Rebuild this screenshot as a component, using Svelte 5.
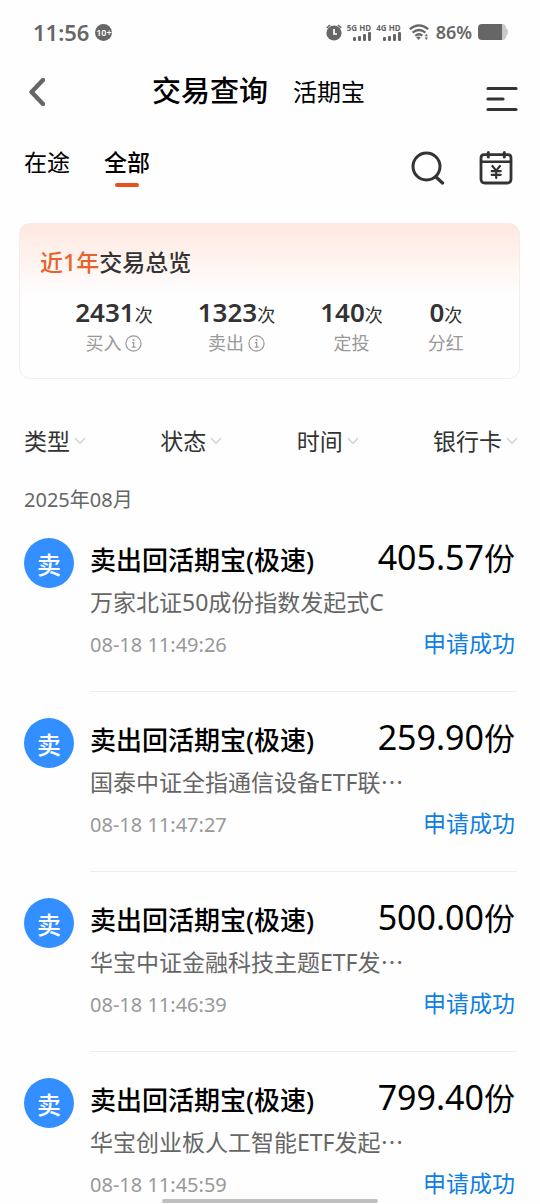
<script>
	let tabs = ['在途', '全部'];
	let activeTab = '全部';

	let stats = [
		{ count: 2431, label: '买入', info: true },
		{ count: 1323, label: '卖出', info: true },
		{ count: 140, label: '定投', info: false },
		{ count: 0, label: '分红', info: false }
	];

	let filters = ['类型', '状态', '时间', '银行卡'];

	let records = [
		{ fund: '万家北证50成份指数发起式C', time: '08-18 11:49:26', amount: '405.57' },
		{ fund: '国泰中证全指通信设备ETF联⋯', time: '08-18 11:47:27', amount: '259.90' },
		{ fund: '华宝中证金融科技主题ETF发⋯', time: '08-18 11:46:39', amount: '500.00' },
		{ fund: '华宝创业板人工智能ETF发起⋯', time: '08-18 11:45:59', amount: '799.40' }
	];
</script>

<div class="page" lang="zh-CN">
	<div class="statusbar">
		<span class="clock">11:56</span>
		<span class="badge">10+</span>
		<div class="system">
			<svg width="16" height="17" viewBox="0 0 16 17">
				<circle cx="8" cy="9" r="7.6" fill="#666" />
				<path d="M0.8 4 L4 1 M15.2 4 L12 1" stroke="#666" stroke-width="1.6" />
				<path d="M8 5 V10 H11" fill="none" stroke="#fff" stroke-width="1.7" />
			</svg>
			{#each ['5G HD', '4G HD'] as net}
				<div class="net">
					<span>{net}</span>
					<svg width="18" height="9" viewBox="0 0 18 9" fill="#666">
						<rect x="0" y="5" width="3" height="4" rx="1" />
						<rect x="5" y="4" width="3" height="5" rx="1" />
						<rect x="10" y="2" width="3" height="7" rx="1" />
						<rect x="15" y="0" width="3" height="9" rx="1" />
					</svg>
				</div>
			{/each}
			<svg class="wifi" width="20" height="17" viewBox="0 0 20 17">
				<g fill="none" stroke="#666" stroke-width="2.2">
					<path d="M0.8 5.2 Q10 -2.6 19.2 5.2" />
					<path d="M3.6 8.6 Q10 3.4 16.4 8.6" />
					<path d="M6.3 11.8 Q10 8.8 13.4 11.6" />
				</g>
				<path d="M7.2 13.2 Q9.5 11.8 11.8 13.2 L9.5 16 Z M15.6 12.2 L17.3 9.8 L19 12.2 Z M15.6 13.6 H19 L17.3 16 Z" fill="#666" />
			</svg>
			<span class="percent">86%</span>
			<svg class="battery" width="30" height="16" viewBox="0 0 30 16">
				<path d="M20 0 H24 Q28 0 28 4 Q30 5 30 8 Q30 11 28 12 Q28 16 24 16 H20 Z" fill="#c9c9c9" />
				<path d="M4 0 H24 V16 H4 Q0 16 0 12 V4 Q0 0 4 0 Z" fill="#666" />
			</svg>
		</div>
	</div>

	<header>
		<button class="back" aria-label="返回">
			<svg width="17" height="28" viewBox="0 0 17 28">
				<path d="M15 2 L3.5 14 L15 26" fill="none" stroke="#666" stroke-width="4.4" stroke-linecap="round" stroke-linejoin="round" />
			</svg>
		</button>
		<div class="titles">
			<h1>交易查询</h1>
			<button>活期宝</button>
		</div>
		<button class="menu" aria-label="菜单">
			<svg width="32" height="26" viewBox="0 0 32 26">
				<path d="M2 2.5 H30 M2 13 H17 M2 23.5 H30" stroke="#333" stroke-width="3.2" stroke-linecap="round" />
			</svg>
		</button>
	</header>

	<nav>
		{#each tabs as tab}
			<button class="tab" class:active={tab === activeTab} on:click={() => (activeTab = tab)}>{tab}</button>
		{/each}
		<div class="tools">
			<button aria-label="搜索">
				<svg width="34" height="34" viewBox="0 0 34 34">
					<circle cx="15.5" cy="15.5" r="13.5" fill="none" stroke="#333" stroke-width="3" />
					<path d="M25 26 L31.5 32" stroke="#333" stroke-width="3.2" stroke-linecap="round" />
				</svg>
			</button>
			<button aria-label="日历">
				<svg width="34" height="34" viewBox="0 0 34 34">
					<g fill="none" stroke="#333" stroke-linecap="round" stroke-linejoin="round">
						<path d="M5 3.6 H29 Q32 3.6 32 7 V28 Q32 32 28 32 H6 Q2 32 2 28 V7 Q2 3.6 5 3.6 Z" stroke-width="2.8" />
						<path d="M2 10.8 H32" stroke-width="2.4" />
						<path d="M9.3 1.6 V6 M25.3 1.6 V6" stroke-width="3" />
						<path d="M13.4 15 L17.2 19.6 L21 15 M17.2 19.6 V27 M12.7 20.2 H21.7 M12.7 23.8 H21.7" stroke-width="2.2" />
					</g>
				</svg>
			</button>
		</div>
	</nav>

	<section class="card">
		<h2><em>近1年</em>交易总览</h2>
		<div class="stats">
			{#each stats as stat}
				<div class="stat">
					<div class="count">{stat.count}<small>次</small></div>
					<div class="label">
						{stat.label}
						{#if stat.info}
							<svg width="17" height="17" viewBox="0 0 17 17">
								<circle cx="8.5" cy="8.5" r="7.6" fill="none" stroke="#999" stroke-width="1.2" />
								<circle cx="8.5" cy="5" r="1" fill="#999" />
								<path d="M7 7.6 H8.7 V12 M6.8 12.2 H10.6" fill="none" stroke="#999" stroke-width="1.2" />
							</svg>
						{/if}
					</div>
				</div>
			{/each}
		</div>
	</section>

	<div class="filters">
		{#each filters as filter}
			<button>
				{filter}
				<svg width="12" height="8" viewBox="0 0 12 8">
					<path d="M1 1 L6 6.4 L11 1" fill="none" stroke="#ccc" stroke-width="1.2" />
				</svg>
			</button>
		{/each}
	</div>

	<main>
		<h3>2025年08月</h3>
		<ul>
			{#each records as record}
				<li>
					<span class="avatar">卖</span>
					<div class="record">
						<div class="line top">
							<strong>卖出回活期宝(极速)</strong>
							<span class="amount">{record.amount}<small>份</small></span>
						</div>
						<div class="fund">{record.fund}</div>
						<div class="line bottom">
							<time>{record.time}</time>
							<span class="state">申请成功</span>
						</div>
					</div>
				</li>
			{/each}
		</ul>
	</main>
	<div class="homebar"></div>
</div>

<style>
	:global(body) {
		background: #fff;
	}
	.page {
		display: flex;
		flex-direction: column;
		height: 100vh;
		overflow: hidden;
		background: #fefefe;
		color: #333;
		font-family: 'Noto Sans', 'Noto Sans CJK SC', sans-serif;
	}
	button {
		display: flex;
		align-items: center;
		margin: 0;
		padding: 0;
		border: 0;
		background: none;
		color: inherit;
		font: inherit;
		cursor: pointer;
	}
	svg {
		display: block;
		flex: none;
	}
	h1,
	h2,
	h3,
	ul {
		margin: 0;
		padding: 0;
	}

	.statusbar {
		display: flex;
		align-items: center;
		height: 64px;
		padding: 0 32px 0 33px;
		color: #666;
	}
	.clock {
		font-size: 22px;
		font-weight: 600;
	}
	.badge {
		display: flex;
		justify-content: center;
		align-items: center;
		width: 17px;
		height: 17px;
		margin-left: 6px;
		border-radius: 50%;
		background: #666;
		color: #fff;
		font-size: 9px;
		font-weight: 600;
	}
	.system {
		display: flex;
		align-items: center;
		margin-left: auto;
	}
	.net {
		display: flex;
		flex-direction: column;
		align-items: flex-end;
		margin-left: 5px;
		font-size: 8px;
		font-weight: 700;
		line-height: 8px;
		white-space: nowrap;
	}
	.wifi {
		margin-left: 8px;
	}
	.percent {
		margin-left: 7px;
		font-size: 18px;
		font-weight: 600;
	}
	.battery {
		margin-left: 6px;
	}

	header {
		display: flex;
		align-items: center;
		height: 56px;
		padding: 0 22px 0 28px;
	}
	.titles {
		display: flex;
		flex: 1;
		justify-content: center;
		align-items: center;
		gap: 25px;
		padding: 0 14px 3px 0;
		color: #000;
		font-size: 24px;
	}
	h1 {
		font-size: 29px;
		font-weight: 500;
		line-height: 40px;
	}
	.menu {
		padding-top: 14px;
	}

	nav {
		display: flex;
		align-items: center;
		gap: 34px;
		box-sizing: border-box;
		height: 84px;
		padding: 8px 27px 0 24px;
		color: #000;
	}
	.tab {
		flex-direction: column;
		font-size: 23px;
		line-height: 34px;
	}
	.tab::after {
		content: '';
		width: 24px;
		height: 4px;
		margin-top: 4px;
		border-radius: 2px;
	}
	.tab.active {
		font-weight: 500;
	}
	.tab.active::after {
		background: #e8501c;
	}
	.tools {
		display: flex;
		gap: 34px;
		margin-left: auto;
		padding-top: 4px;
	}

	.card {
		margin: 19px 20px 0 19px;
		padding: 20px 20px 23px;
		border: 1px solid #f7ebe5;
		border-radius: 11px;
		background: linear-gradient(#ffe8e0, #fefefe 70px);
	}
	h2 {
		font-size: 23px;
		font-weight: 500;
		line-height: 36px;
	}
	h2 em {
		color: #e8622c;
		font-style: normal;
	}
	.stats {
		display: flex;
		justify-content: center;
		gap: 45px;
		margin-top: 16px;
	}
	.stat {
		display: flex;
		flex-direction: column;
		align-items: center;
	}
	.count {
		font-size: 26px;
		font-weight: 600;
		line-height: 32px;
	}
	.count small {
		font-size: 18px;
		font-weight: 400;
	}
	.label {
		display: flex;
		align-items: center;
		gap: 4px;
		color: #999;
		font-size: 18px;
		line-height: 24px;
	}

	.filters {
		display: flex;
		justify-content: space-between;
		margin-top: 45px;
		padding: 0 22px 0 24px;
		font-size: 23px;
		line-height: 34px;
	}
	.filters button {
		gap: 4px;
	}

	main {
		flex: 1;
		min-height: 0;
		overflow-y: auto;
		scrollbar-width: none;
	}
	h3 {
		padding: 30px 24px 0;
		color: #666;
		font-size: 20px;
		font-weight: 400;
		line-height: 24px;
	}
	ul {
		list-style: none;
	}
	li {
		display: flex;
		gap: 16px;
		padding: 0 23px 0 24px;
	}
	.avatar {
		display: flex;
		flex: none;
		justify-content: center;
		align-items: center;
		width: 50px;
		height: 50px;
		margin-top: 26px;
		border-radius: 50%;
		background: #338fff;
		color: #fff;
		font-size: 24px;
		font-weight: 500;
	}
	.record {
		flex: 1;
		min-width: 0;
		padding: 24px 2px 27px 0;
		border-bottom: 1px solid #eee;
	}
	.line {
		display: flex;
		justify-content: space-between;
		align-items: baseline;
		white-space: nowrap;
	}
	.top {
		color: #000;
		line-height: 42px;
	}
	strong {
		font-size: 26px;
		font-weight: 500;
	}
	.amount {
		font-size: 34px;
	}
	.amount small {
		font-size: 31px;
	}
	.fund {
		overflow: hidden;
		color: #666;
		font-size: 23px;
		line-height: 43px;
		white-space: nowrap;
	}
	.bottom {
		line-height: 38px;
	}
	time {
		color: #999;
		font-size: 20px;
	}
	.state {
		color: #0f80e0;
		font-size: 23px;
	}
	.homebar {
		position: fixed;
		bottom: 1px;
		left: 30%;
		width: 40%;
		height: 4px;
		border-radius: 2px;
		background: #c0c0c0;
	}
</style>
